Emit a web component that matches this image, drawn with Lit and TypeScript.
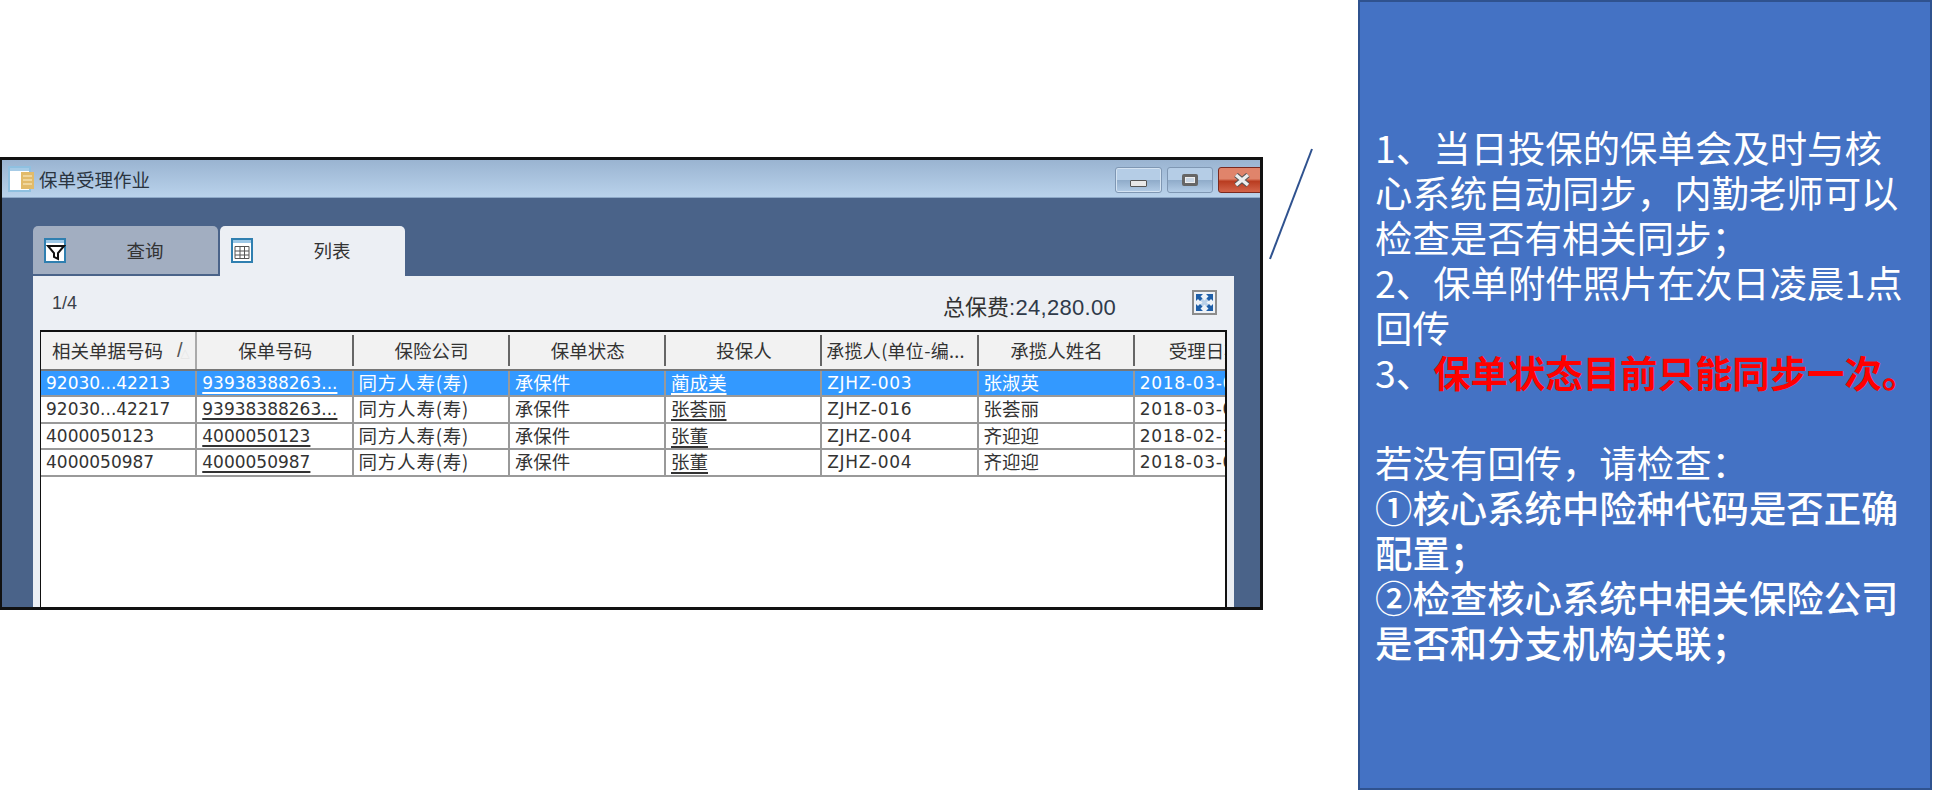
import { LitElement, html, css, svg } from "lit";
import { customElement } from "lit/decorators.js";

interface Row { a: string; b: string; c: string; d: string; e: string; f: string; g: string; h: string; sel?: boolean }

const HEAD = ["保单号码", "保险公司", "保单状态", "投保人"];
const ROWS: Row[] = [
  { a: "92030...42213", b: "93938388263...", c: "同方人寿(寿)", d: "承保件", e: "蔺成美", f: "ZJHZ-003", g: "张淑英", h: "2018-03-01", sel: true },
  { a: "92030...42217", b: "93938388263...", c: "同方人寿(寿)", d: "承保件", e: "张荟丽", f: "ZJHZ-016", g: "张荟丽", h: "2018-03-01" },
  { a: "4000050123", b: "4000050123", c: "同方人寿(寿)", d: "承保件", e: "张董", f: "ZJHZ-004", g: "齐迎迎", h: "2018-02-13" },
  { a: "4000050987", b: "4000050987", c: "同方人寿(寿)", d: "承保件", e: "张董", f: "ZJHZ-004", g: "齐迎迎", h: "2018-03-01" },
];

const frame = svg`<rect x="1" y="1" width="20" height="23" fill="#fff" stroke="#2f7fb0" stroke-width="2"/><rect x="2" y="2" width="18" height="3" fill="#9cc7e6"/>`;

@customElement("app-root")
export class AppRoot extends LitElement {
  static styles = css`
    :host { display: block; position: relative; width: 1944px; height: 791px; background: #fff; overflow: hidden; font-family: "Noto Sans CJK SC", sans-serif; }
    .page { display: flex; align-items: flex-start; height: 791px; }
    .left { flex: none; width: 1263px; padding-top: 157px; box-sizing: border-box; }
    .window { height: 453px; box-sizing: border-box; border: 3px solid #111; border-left-width: 2px; display: flex; flex-direction: column; overflow: hidden; background: #4a6389; }
    .title { flex: none; height: 38px; display: flex; align-items: center; padding-left: 6px; background: linear-gradient(#9ab4d1, #b9d2eb); border-bottom: 1px solid #8ea9c8; box-sizing: border-box; }
    .title-text { font-size: 18.5px; color: #2a3440; margin-left: 3px; }
    .btns { margin-left: auto; width: 145px; height: 26px; display: flex; gap: 5px; overflow: hidden; margin-top: 2px; flex: none; }
    .btn { flex: none; width: 46px; height: 26px; box-sizing: border-box; border: 1px solid #7f97b3; border-radius: 3px; background: linear-gradient(#b5cde6 0 50%, #8fabc9 50%, #b3cce6); display: flex; align-items: center; justify-content: center; }
    .btn.min { width: 47px; box-shadow: inset 0 0 0 1px #d4e3f2; }
    .btn.close { width: 47px; background: linear-gradient(#e0846b 0 45%, #b93c20 55%, #d3644a); border-color: #7a2a20; }
    .bar { width: 17px; height: 7px; box-sizing: border-box; background: #e8e8e8; border: 1px solid #555; border-radius: 1px; margin-top: 8px; }
    .box { width: 16px; height: 12px; box-sizing: border-box; background: #c9d6e4; border: 3px solid #666; border-radius: 2px; box-shadow: inset 0 0 0 1px #eee; }
    .body { flex: 1; min-height: 0; display: flex; flex-direction: column; padding: 28px 26px 0 31px; }
    .tabs { flex: none; height: 50px; display: flex; gap: 2px; align-items: flex-start; }
    .tab { width: 185px; box-sizing: border-box; border-radius: 5px 5px 0 0; display: flex; align-items: center; padding-left: 11px; font-size: 18.5px; color: #333; }
    .tab.off { height: 48px; background: #a2aec1; }
    .tab.on { height: 50px; background: #eceff4; padding-bottom: 2px; }
    .tab span { flex: 1; text-align: center; padding-left: 6px; }
    .panel { flex: 1; min-height: 0; background: #eceff4; padding: 0 7px; display: flex; flex-direction: column; }
    .tool { flex: none; height: 54px; display: flex; align-items: center; }
    .count { margin-left: 12px; margin-top: 1px; font: 18px "Liberation Sans", sans-serif; color: #3a3f48; }
    .sum { margin-left: auto; margin-top: 5px; font-size: 22px; color: #333; line-height: 30px; }
    .sum b { font: 22px "Liberation Sans", sans-serif; color: #2f3a4a; letter-spacing: 0.3px; }
    .expand { margin: -1px 10px 0 76px; display: block; }
    .grid { flex: 1; min-height: 0; background: #fff; border: 2px solid #111; border-left-width: 1px; border-bottom: 0; overflow: hidden; color: #333; }
    .row { display: grid; grid-template-columns: repeat(8, 156.25px); width: 1250px; height: 26.5px; box-sizing: border-box; border-bottom: 2px solid #999; }
    .row.head { height: 38.5px; background: #f2f2f2; border-bottom: 2px solid #777; }
    .row.sel { background: #3399ff; color: #fff; }
    .hc { position: relative; display: flex; align-items: center; justify-content: center; font-size: 18.5px; line-height: 24px; white-space: nowrap; overflow: hidden; }
    .hc::after { content: ""; position: absolute; right: 0; top: 3px; bottom: 3px; width: 2px; background: #666; }
    .hc.first::after { top: 0; bottom: 0; background: #aaa; }
    .hc.first { justify-content: flex-start; padding-left: 11px; gap: 14px; }
    .sort { font: 20px "Liberation Sans", sans-serif; color: #555; }
    .sort i { font: 12px "DejaVu Sans", sans-serif; color: #e6e6e6; margin-left: -2px; }
    .hc.squeeze { justify-content: flex-start; padding-left: 4px; font-size: 18px; letter-spacing: 0.3px; }
    .hc.last { justify-content: flex-start; padding-left: 34px; }
    .hc.last::after { display: none; }
    .c { border-right: 2px solid #999; padding-left: 5px; white-space: nowrap; overflow: hidden; display: flex; align-items: center; font: 17px/20px "DejaVu Sans", sans-serif; }
    .c.cjk { font: 18.5px/20px "Noto Sans CJK SC", sans-serif; padding-bottom: 2px; }
    .c.co { letter-spacing: 0.8px; }
    .c.code { letter-spacing: 0.7px; }
    .c u { text-decoration-thickness: 2px; text-underline-offset: 3px; }
    .note { flex: none; margin-left: 95px; width: 574px; height: 790px; box-sizing: border-box; border: 2px solid #2f528f; background: #4472c4; color: #fff; display: flex; flex-direction: column; justify-content: center; padding-left: 15px; font-size: 37.4px; line-height: 45px; }
    .ln { display: block; white-space: nowrap; height: 45px; }
    .ln.b { font-weight: 500; }
    .red { color: #f00; font-weight: 700; }
    .line { position: absolute; left: 1268px; top: 147px; }
  `;

  private doc() {
    return html`<svg width="28" height="26" viewBox="0 0 28 26"><rect x="1" y="1" width="21" height="24" fill="#fff" stroke="#8fc0e0" stroke-width="2"/><rect x="2" y="2" width="19" height="3" fill="#a6cbe6"/><rect x="13" y="6" width="13" height="17" fill="#e2bb6a"/><path d="M15 10h9M15 14h9M15 18h9" stroke="#f3dfae" stroke-width="1.500"/></svg>`;
  }

  render() {
    return html`
      <div class="page">
        <div class="left">
          <div class="window">
            <div class="title">
              ${this.doc()}
              <span class="title-text">保单受理作业</span>
              <div class="btns">
                <div class="btn min"><div class="bar"></div></div>
                <div class="btn"><div class="box"></div></div>
                <div class="btn close">
                  <svg width="18" height="14" viewBox="0 0 18 14"><path d="M3 2l12 10M15 2L3 12" stroke="#555" stroke-width="5.500"/><path d="M3 2l12 10M15 2L3 12" stroke="#eee" stroke-width="3.500"/></svg>
                </div>
              </div>
            </div>
            <div class="body">
              <div class="tabs">
                <div class="tab off">
                  <svg width="22" height="25" viewBox="0 0 22 25">${frame}<path d="M4 8h16l-6 7v6l-4-2v-4z" fill="#fff" stroke="#111" stroke-width="2"/></svg>
                  <span>查询</span>
                </div>
                <div class="tab on">
                  <svg width="22" height="25" viewBox="0 0 22 25">${frame}<path d="M4 8.500h14v12H4zM4 13h14M4 17h14M9 8.500v12M13.500 8.500v12" fill="none" stroke="#555" stroke-width="1"/></svg>
                  <span>列表</span>
                </div>
              </div>
              <div class="panel">
                <div class="tool">
                  <span class="count">1/4</span>
                  <span class="sum">总保费<b>:24,280.00</b></span>
                  <svg class="expand" width="25" height="25" viewBox="0 0 25 25">
                    <rect x="1" y="1" width="23" height="23" fill="#eef2f7" stroke="#8c8c8c" stroke-width="2"/>
                    <path d="M8 8l9 9M17 8l-9 9" stroke="#b9d0e8" stroke-width="3"/>
                    <path d="M4 4h7l-2.500 2.500 2 2-2.500 2.500-2-2L4 11zM21 4h-7l2.500 2.500-2 2 2.500 2.500 2-2L21 11zM4 21h7l-2.500-2.500 2-2-2.500-2.500-2 2L4 14zM21 21h-7l2.500-2.500-2-2 2.500-2.500 2 2L21 14z" fill="#1f5fa8"/>
                  </svg>
                </div>
                <div class="grid">
                  <div class="row head">
                    <div class="hc first">相关单据号码<span class="sort">/<i>△</i></span></div>
                    ${HEAD.map((h) => html`<div class="hc">${h}</div>`)}
                    <div class="hc squeeze">承揽人(单位-编...</div>
                    <div class="hc">承揽人姓名</div>
                    <div class="hc last">受理日期</div>
                  </div>
                  ${ROWS.map((r) => html`
                    <div class="row ${r.sel ? "sel" : ""}">
                      <div class="c">${r.a}</div>
                      <div class="c"><u>${r.b}</u></div>
                      <div class="c cjk co">${r.c}</div>
                      <div class="c cjk">${r.d}</div>
                      <div class="c cjk"><u>${r.e}</u></div>
                      <div class="c code">${r.f}</div>
                      <div class="c cjk">${r.g}</div>
                      <div class="c code">${r.h}</div>
                    </div>`)}
                </div>
              </div>
            </div>
          </div>
        </div>
        <div class="note">
          <span class="ln">1、当日投保的保单会及时与核</span>
          <span class="ln">心系统自动同步，内勤老师可以</span>
          <span class="ln">检查是否有相关同步；</span>
          <span class="ln">2、保单附件照片在次日凌晨1点</span>
          <span class="ln">回传</span>
          <span class="ln">3、<span class="red">保单状态目前只能同步一次。</span></span>
          <span class="ln"></span>
          <span class="ln">若没有回传，请检查：</span>
          <span class="ln b">①核心系统中险种代码是否正确</span>
          <span class="ln b">配置；</span>
          <span class="ln b">②检查核心系统中相关保险公司</span>
          <span class="ln b">是否和分支机构关联；</span>
        </div>
      </div>
      <svg class="line" width="48" height="116" viewBox="0 0 48 116"><path d="M44 2L2 112" stroke="#2f528f" stroke-width="2" fill="none"/></svg>
    `;
  }
}
